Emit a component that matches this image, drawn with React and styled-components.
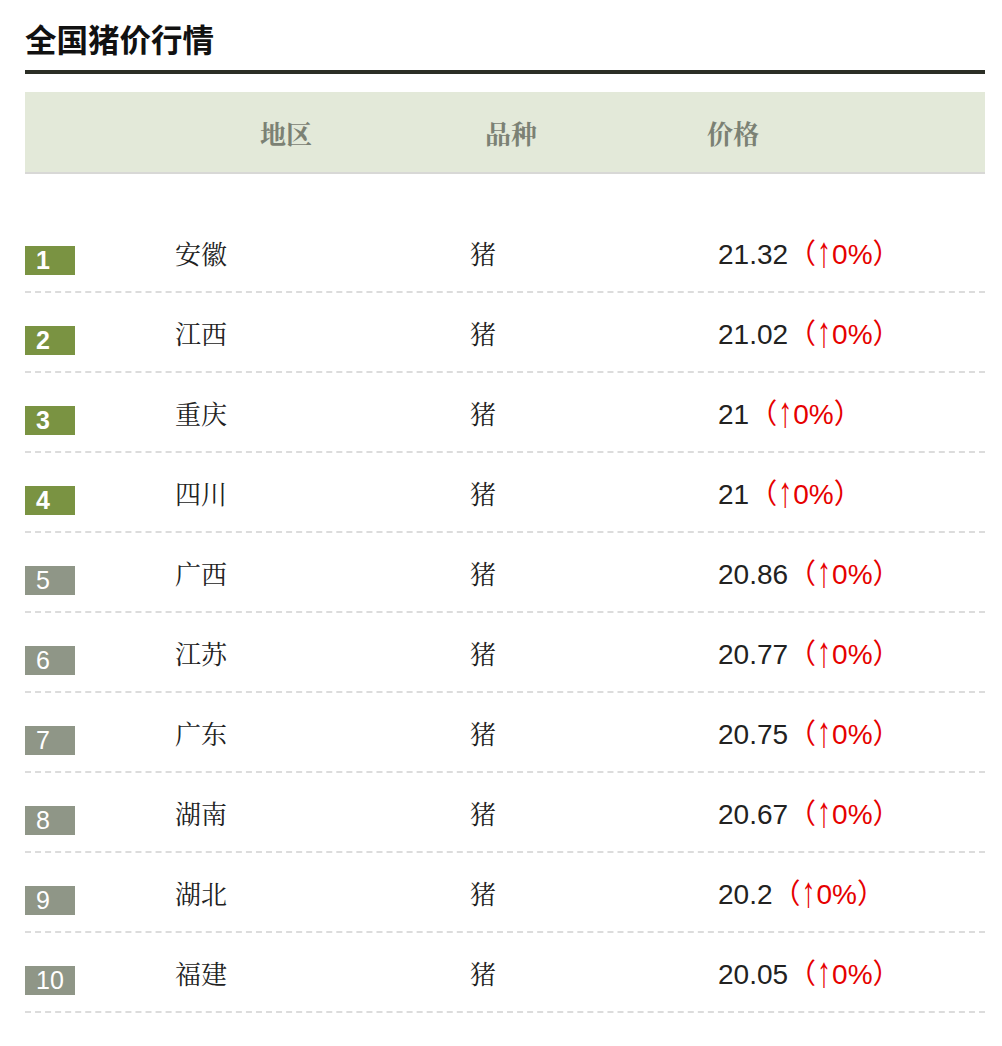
import React from "react";
import styled, { createGlobalStyle } from "styled-components";

const rows = [
  { region: "安徽", kind: "猪", price: "21.32" },
  { region: "江西", kind: "猪", price: "21.02" },
  { region: "重庆", kind: "猪", price: "21" },
  { region: "四川", kind: "猪", price: "21" },
  { region: "广西", kind: "猪", price: "20.86" },
  { region: "江苏", kind: "猪", price: "20.77" },
  { region: "广东", kind: "猪", price: "20.75" },
  { region: "湖南", kind: "猪", price: "20.67" },
  { region: "湖北", kind: "猪", price: "20.2" },
  { region: "福建", kind: "猪", price: "20.05" },
];

const GlobalStyle = createGlobalStyle`
  body {
    margin: 0;
    background: #ffffff;
    font-family: "Liberation Sans", "Noto Sans CJK SC", sans-serif;
  }
`;

const Page = styled.div`
  padding: 18px 17px 0 25px;
`;

const Title = styled.h2`
  margin: 0;
  padding-bottom: 12px;
  border-bottom: 4px solid #2b2e25;
  font-family: "Noto Sans CJK SC", sans-serif;
  font-size: 31.5px;
  font-weight: 700;
  line-height: 40px;
  color: #111;
`;

const Head = styled.div`
  margin-top: 18px;
  height: 80px;
  display: grid;
  grid-template-columns: 235px 225px 222px 1fr;
  align-items: center;
  background: #e3e9d9;
  border-bottom: 2px solid #d8d8d6;

  span {
    font-family: "Noto Serif CJK SC", "Noto Sans CJK SC", serif;
    font-size: 26px;
    font-weight: 700;
    color: #7b8174;
  }
`;

const List = styled.div`
  margin-top: 39px;
`;

const Row = styled.div`
  height: 78px;
  display: grid;
  grid-template-columns: 150px 295px 248px 1fr;
  align-items: center;
  border-bottom: 2px dashed #dcdcdc;
`;

const Badge = styled.span`
  margin-top: 17px;
  width: 50px;
  height: 29px;
  box-sizing: border-box;
  padding-left: 11px;
  background: ${(p) => (p.$top ? "#7a9342" : "#8f9687")};
  color: #fff;
  font-family: "Liberation Sans", Arial, sans-serif;
  font-size: 25px;
  font-weight: ${(p) => (p.$top ? 700 : 400)};
  line-height: 29px;
`;

const Cell = styled.span`
  font-family: "Noto Serif CJK SC", "Noto Sans CJK SC", serif;
  font-size: 26px;
  color: #222;
`;

const Price = styled.span`
  font-family: "Liberation Sans", "Noto Sans CJK SC", sans-serif;
  font-size: 28px;
  color: #222;
  white-space: nowrap;
`;

const Change = styled.span`
  color: #e60000;
`;

const Arrow = styled.span`
  display: inline-block;
  margin: 0 1px;
  font-family: "Liberation Sans", sans-serif;
  transform: translateY(7px) scaleY(1.55);
  transform-origin: 50% 100%;
`;

export default function App() {
  return (
    <Page>
      <GlobalStyle />
      <Title>全国猪价行情</Title>
      <Head>
        <span />
        <span>地区</span>
        <span>品种</span>
        <span>价格</span>
      </Head>
      <List>
        {rows.map((r, i) => (
          <Row key={i}>
            <Badge $top={i < 4}>{i + 1}</Badge>
            <Cell>{r.region}</Cell>
            <Cell>{r.kind}</Cell>
            <Price>
              {r.price}
              <Change>
                （<Arrow>↑</Arrow>0%）
              </Change>
            </Price>
          </Row>
        ))}
      </List>
    </Page>
  );
}
